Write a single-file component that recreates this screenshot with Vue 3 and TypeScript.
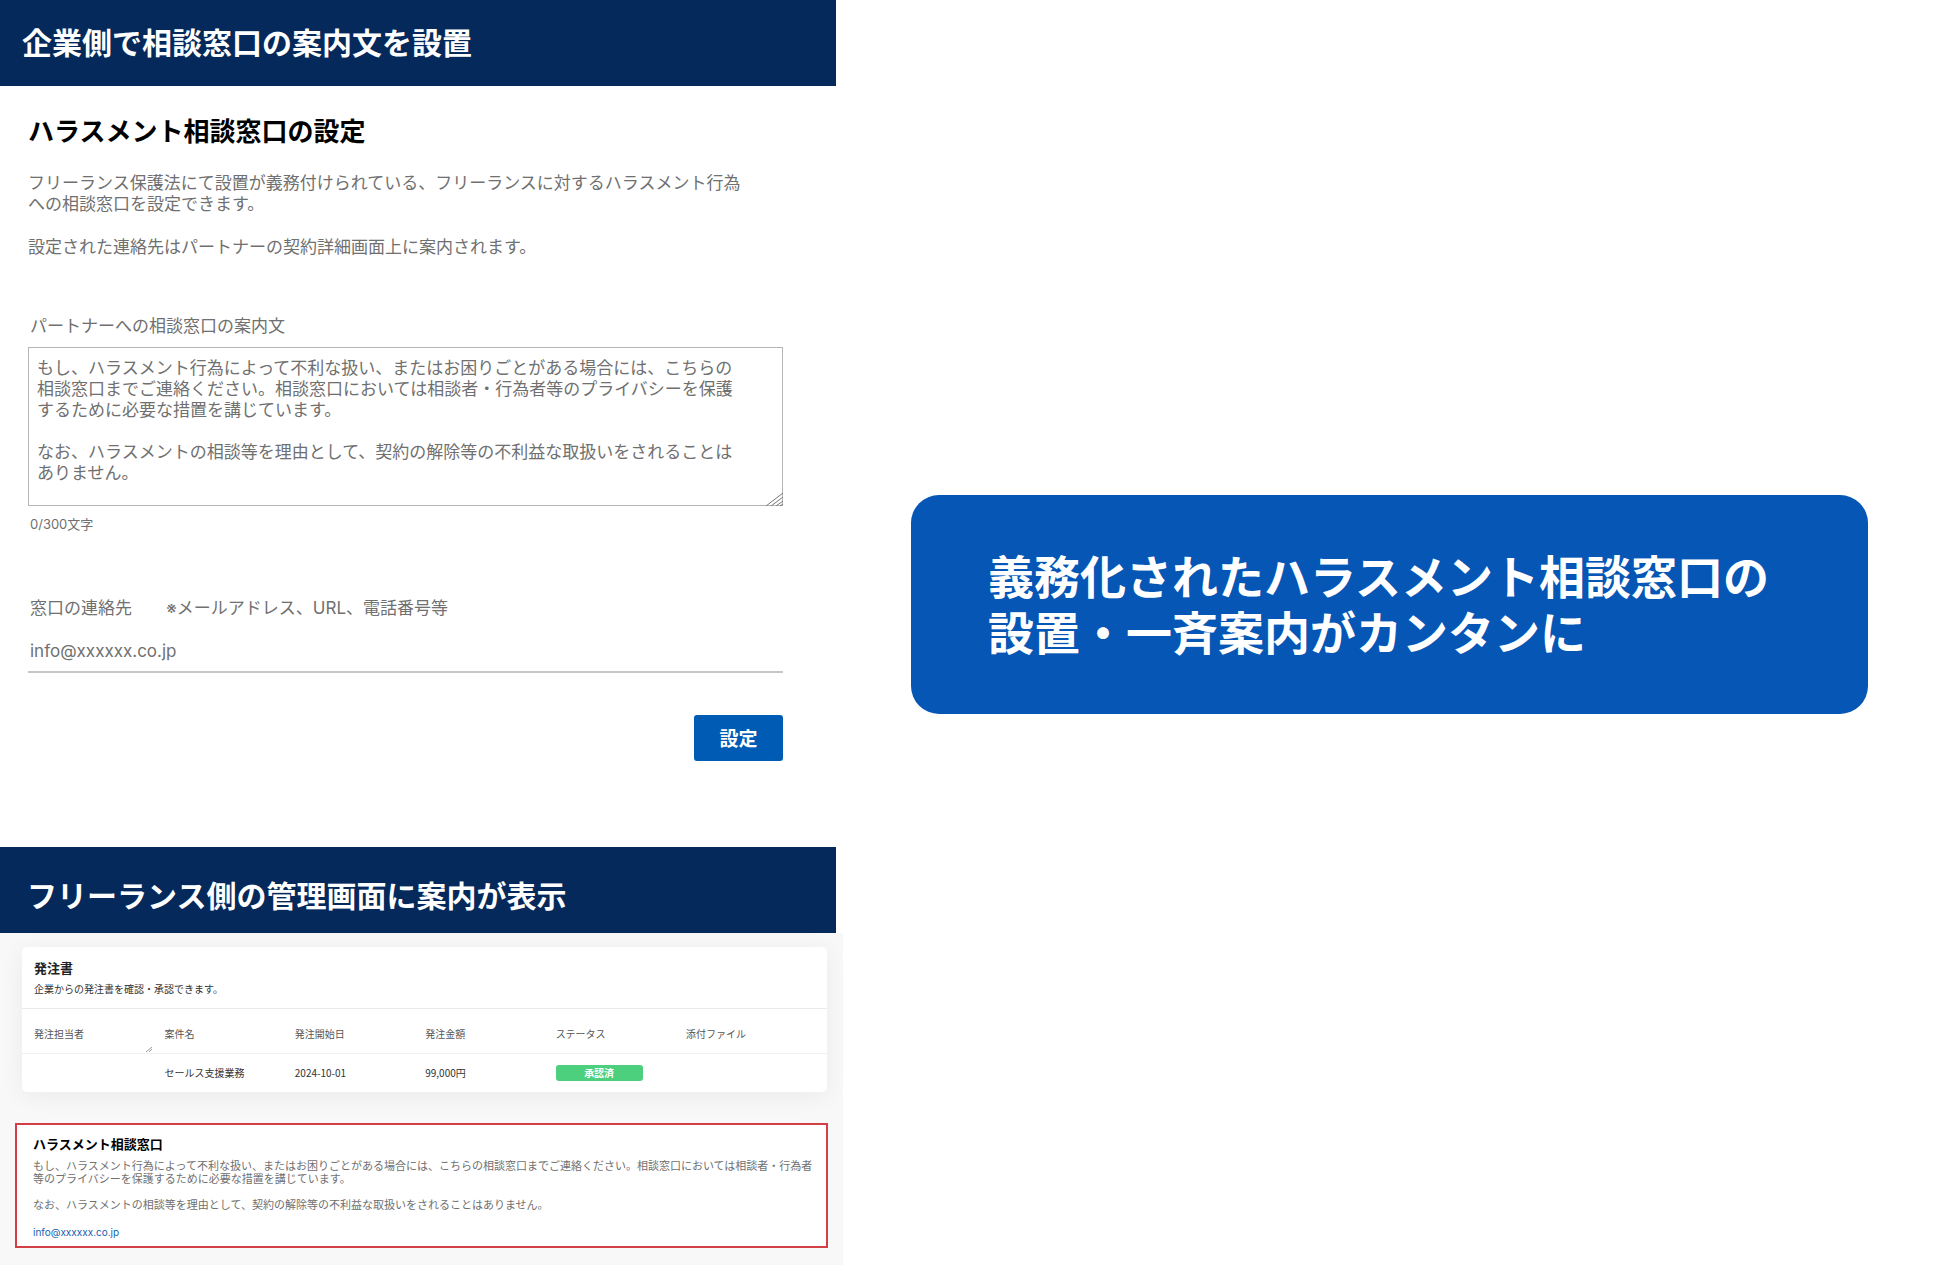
<script setup lang="ts">
import { ref } from 'vue'

interface Order {
  person: string
  title: string
  start: string
  amount: string
  status: string
  file: string
}

const columns: string[] = ['発注担当者', '案件名', '発注開始日', '発注金額', 'ステータス', '添付ファイル']

const orders: Order[] = [
  { person: '', title: 'セールス支援業務', start: '2024-10-01', amount: '99,000円', status: '承認済', file: '' },
]

const guide = ref<string>('')
const contact = ref<string>('')

const guidePlaceholder = [
  'もし、ハラスメント行為によって不利な扱い、またはお困りごとがある場合には、こちらの',
  '相談窓口までご連絡ください。相談窓口においては相談者・行為者等のプライバシーを保護',
  'するために必要な措置を講じています。',
  '',
  'なお、ハラスメントの相談等を理由として、契約の解除等の不利益な取扱いをされることは',
  'ありません。',
].join('\n')
</script>

<template>
  <main class="page">
    <div class="left">
      <section>
        <h2 class="banner">企業側で相談窓口の案内文を設置</h2>
        <form class="settings" @submit.prevent>
          <h3 class="settings-title">ハラスメント相談窓口の設定</h3>
          <p class="text">
            フリーランス保護法にて設置が義務付けられている、フリーランスに対するハラスメント行為<br />への相談窓口を設定できます。
          </p>
          <p class="text second">設定された連絡先はパートナーの契約詳細画面上に案内されます。</p>

          <label class="label" for="guide">パートナーへの相談窓口の案内文</label>
          <div class="area-wrap">
            <textarea id="guide" v-model="guide" class="area" maxlength="300" :placeholder="guidePlaceholder"></textarea>
            <svg class="grip" viewBox="0 0 18 14" aria-hidden="true">
              <path d="M1 14 18 1M6 14 18 5M11 14 18 9M15 14 18 12" />
            </svg>
          </div>
          <p class="counter">{{ guide.length }}/300文字</p>

          <label class="label contact-label" for="contact">窓口の連絡先　　※メールアドレス、URL、電話番号等</label>
          <input id="contact" v-model="contact" class="contact" type="text" placeholder="info@xxxxxx.co.jp" />

          <div class="actions">
            <button class="submit" type="submit">設定</button>
          </div>
        </form>
      </section>

      <section class="partner">
        <h2 class="banner low">フリーランス側の管理画面に案内が表示</h2>
        <div class="screen">
          <article class="card">
            <header class="card-head">
              <h3 class="card-title">発注書</h3>
              <p class="card-sub">企業からの発注書を確認・承認できます。</p>
            </header>
            <table class="orders">
              <thead>
                <tr>
                  <th v-for="(c, i) in columns" :key="c" scope="col">
                    {{ c }}
                    <svg v-if="i === 0" class="mini-grip" viewBox="0 0 6 5" aria-hidden="true">
                      <path d="M0 5 6 0M3 5 6 2" />
                    </svg>
                  </th>
                </tr>
              </thead>
              <tbody>
                <tr v-for="o in orders" :key="o.title">
                  <td>{{ o.person }}</td>
                  <td>{{ o.title }}</td>
                  <td>{{ o.start }}</td>
                  <td>{{ o.amount }}</td>
                  <td><span class="badge">{{ o.status }}</span></td>
                  <td>{{ o.file }}</td>
                </tr>
              </tbody>
            </table>
          </article>

          <article class="notice">
            <h3 class="notice-title">ハラスメント相談窓口</h3>
            <p class="notice-text">
              もし、ハラスメント行為によって不利な扱い、またはお困りごとがある場合には、こちらの相談窓口までご連絡ください。相談窓口においては相談者・行為者<br />等のプライバシーを保護するために必要な措置を講じています。
            </p>
            <p class="notice-text gap">
              なお、ハラスメントの相談等を理由として、契約の解除等の不利益な取扱いをされることはありません。
            </p>
            <a class="notice-link" href="mailto:info@xxxxxx.co.jp">info@xxxxxx.co.jp</a>
          </article>
        </div>
      </section>
    </div>

    <div class="right">
      <p class="callout">義務化されたハラスメント相談窓口の<br />設置・一斉案内がカンタンに</p>
    </div>
  </main>
</template>

<style>
body {
  margin: 0;
  background: #fff;
}
</style>

<style scoped>
.page {
  display: flex;
  min-height: 100vh;
  font-family: 'Noto Sans CJK JP', 'Noto Sans', sans-serif;
  color: #707070;
}
.page * {
  box-sizing: border-box;
}
h2,
h3,
p {
  margin: 0;
}
.left {
  flex: 0 0 843px;
  min-width: 0;
  display: flex;
  flex-direction: column;
}
.banner {
  height: 86px;
  margin-right: 7px;
  padding: 0 22px;
  font-size: 30px;
  font-weight: 700;
  line-height: 82px;
  white-space: nowrap;
  color: #fff;
  background: #05295b;
}
.banner.low {
  padding: 6px 27px 0;
}
.settings {
  padding: 28px 60px 86px 28px;
}
.settings-title {
  font-size: 26px;
  font-weight: 700;
  line-height: 32px;
  color: #000;
}
.text {
  margin-top: 25px;
  font-size: 17px;
  line-height: 21px;
  white-space: nowrap;
}
.text.second {
  margin-top: 22px;
}
.label {
  display: block;
  margin: 58px 0 12px 2px;
  font-size: 17px;
  line-height: 21px;
}
.area-wrap {
  position: relative;
}
.area {
  display: block;
  width: 100%;
  height: 159px;
  padding: 8px;
  border: 1px solid #b5b5b5;
  border-radius: 0;
  outline: 0;
  resize: none;
  overflow: hidden;
  font-family: inherit;
  font-size: 17px;
  line-height: 21px;
  color: #707070;
  background: #fff;
}
.area::placeholder,
.contact::placeholder {
  color: #707070;
  opacity: 1;
}
.grip {
  position: absolute;
  right: 0;
  bottom: 0;
  width: 18px;
  height: 14px;
  fill: none;
  stroke: #777;
}
.counter {
  margin: 8px 0 0 2px;
  font-family: Inter, 'Noto Sans CJK JP', sans-serif;
  font-size: 13px;
  line-height: 21px;
}
.contact-label {
  margin: 63px 0 15px 2px;
  font-family: Inter, 'Noto Sans CJK JP', sans-serif;
}
.contact {
  display: block;
  width: 100%;
  height: 39px;
  padding: 0 2px 4px;
  border: 0;
  border-bottom: 2px solid #c6c6c6;
  border-radius: 0;
  outline: 0;
  font-family: Inter, 'Noto Sans CJK JP', sans-serif;
  font-size: 17px;
  color: #707070;
  background: transparent;
}
.actions {
  display: flex;
  justify-content: flex-end;
  margin-top: 42px;
}
.submit {
  width: 89px;
  height: 46px;
  padding: 0 0 2px;
  border: 0;
  border-radius: 3px;
  font-family: inherit;
  font-size: 19px;
  font-weight: 700;
  color: #fff;
  background: #005bb5;
}
.partner {
  flex: 1;
  display: flex;
  flex-direction: column;
}
.screen {
  flex: 1;
  padding: 14px 15px 16px;
  background: #f8f8f8;
}
.card {
  margin: 0 1px 31px 7px;
  border-radius: 5px;
  background: #fff;
  box-shadow: 0 4px 24px rgba(0, 0, 0, 0.06);
}
.card-head {
  padding: 11px 12px;
  border-bottom: 1px solid #ebebeb;
}
.card-title {
  font-size: 13px;
  font-weight: 700;
  line-height: 20px;
  color: #222;
}
.card-sub {
  margin-top: 3px;
  font-size: 10px;
  line-height: 16px;
  color: #333;
}
.orders {
  width: 100%;
  border-collapse: collapse;
  table-layout: fixed;
  font-size: 10px;
  line-height: 16px;
  color: #333;
}
.orders th {
  position: relative;
  width: 16.2%;
  height: 44px;
  padding: 6px 0 0 12px;
  border-bottom: 1px solid #f0f0f0;
  font-weight: 400;
  text-align: left;
  color: #555;
}
.orders th:last-child {
  width: auto;
}
.orders td {
  height: 39px;
  padding: 0 0 0 12px;
}
.mini-grip {
  position: absolute;
  right: 0;
  bottom: 1px;
  width: 6px;
  height: 5px;
  fill: none;
  stroke: #999;
}
.badge {
  display: block;
  width: 87px;
  border-radius: 3px;
  font-weight: 700;
  text-align: center;
  color: #fff;
  background: #4cd07d;
}
.notice {
  padding: 9px 16px 6px;
  border: 2px solid #d23f45;
  background: #fff;
}
.notice-title {
  font-size: 13px;
  font-weight: 700;
  line-height: 20px;
  color: #000;
}
.notice-text {
  margin-top: 5px;
  font-size: 11px;
  line-height: 13px;
  white-space: nowrap;
}
.notice-text.gap {
  margin-top: 13px;
}
.notice-link {
  display: block;
  margin-top: 13px;
  font-family: Inter, 'Noto Sans CJK JP', sans-serif;
  font-size: 10px;
  line-height: 16px;
  text-decoration: none;
  color: #1660b0;
}
.right {
  flex: 1;
  padding: 495px 82px 0 68px;
}
.callout {
  padding: 51px 24px 56px 77px;
  border-radius: 28px;
  font-size: 46px;
  font-weight: 700;
  line-height: 56px;
  white-space: nowrap;
  color: #fff;
  background: #0556b5;
}
</style>
